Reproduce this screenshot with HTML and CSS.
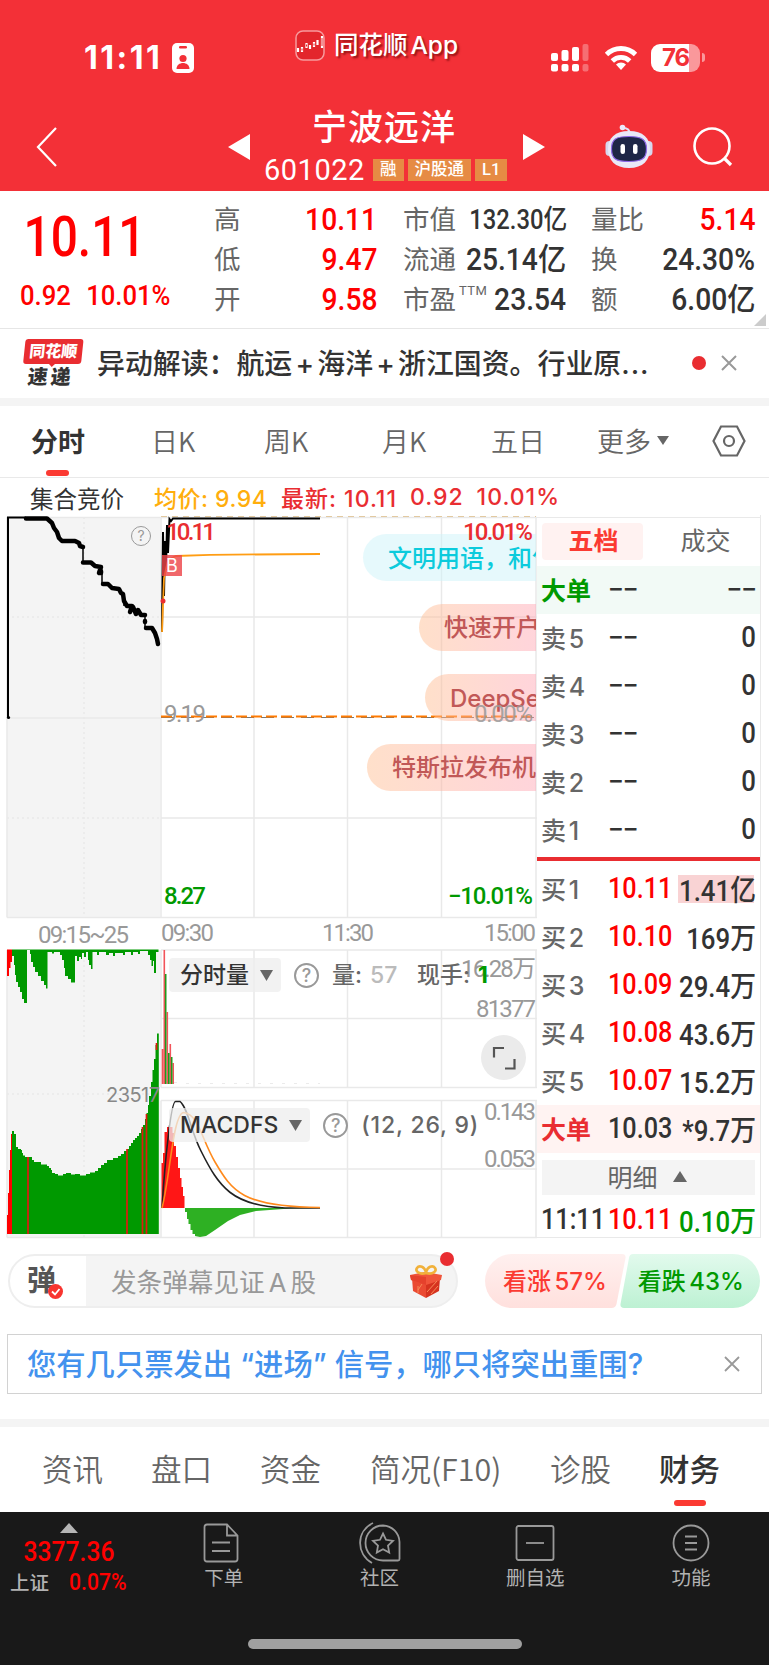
FILE: index.html
```html
<!DOCTYPE html>
<html lang="zh-CN">
<head>
    <meta charset="UTF-8">
    <meta name="viewport" content="width=device-width, initial-scale=1.0">
    <title>宁波远洋 601022</title>
    <link rel="stylesheet" href="styles.css">
</head>
<body>

    <header class="header">
        <div class="status-bar">
            <div class="status-time">11:11</div>
            <svg class="id-badge" width="22" height="30" viewBox="0 0 22 30">
                <rect width="22" height="30" rx="5" fill="#fff"/>
                <rect x="7" y="3" width="8" height="2.4" rx="1.2" fill="#f33037"/>
                <circle cx="11" cy="15.500" r="3.600" fill="#f33037"/>
                <path d="M4.500 26c0-8 13-8 13 0z" fill="#f33037"/>
            </svg>
            <div class="app-name">
                <svg width="30" height="31" viewBox="0 0 30 31">
                    <rect x="1" y="1" width="28" height="29" rx="7" fill="#e3262c" stroke="#f79a9d" stroke-width="1.500"/>
                    <path d="M3 18v4M7 17v5M11.500 13v5M15 15v4M19 12v5M22.500 10v5M27 6v12" stroke="#fff" stroke-width="2.200"/>
                    <path d="M7 18.500v2M11.500 14.500v2M19 13.500v2M27 8v8" stroke="#e3262c"/>
                </svg>
                <span>同花顺<b>App</b></span>
            </div>
            <svg class="signal" width="38" height="28" viewBox="0 0 38 28" fill="#fff">
                <rect y="9" width="7" height="8" rx="2"/>
                <rect x="10.500" y="6" width="7" height="11" rx="2"/>
                <rect x="21" y="3" width="7" height="14" rx="2"/>
                <rect x="31.500" width="6" height="17" rx="2" opacity=".3"/>
                <rect y="20" width="7" height="7.500" rx="2"/>
                <rect x="10.500" y="20" width="7" height="7.500" rx="2"/>
                <rect x="21" y="20" width="7" height="7.500" rx="2"/>
                <rect x="31.500" y="20" width="6" height="7.500" rx="2" opacity=".3"/>
            </svg>
            <svg class="wifi" width="34" height="26" viewBox="0 0 34 26" fill="none" stroke="#fff" stroke-width="4.800">
                <path d="M2.500 9.500a20.500 20.500 0 0 1 29 0"/>
                <path d="M8.300 16a12.300 12.300 0 0 1 17.400 0"/>
                <path d="M17 25l-5-5.500a7 7 0 0 1 10 0z" fill="#fff" stroke="none"/>
            </svg>
            <div class="battery"><span>76</span></div>
        </div>

        <div class="nav">
            <svg class="back" width="22" height="40" viewBox="0 0 22 40" fill="none" stroke="#fff" stroke-width="2.200">
                <path d="M20 1L2 20l18 19"/>
            </svg>
            <svg class="prev" width="22" height="26" viewBox="0 0 22 26"><path d="M22 0v26L0 13z" fill="#fff"/></svg>
            <div class="stock">
                <h1>宁波远洋</h1>
                <div class="stock-code">
                    <span class="code">601022</span>
                    <span class="tag">融</span>
                    <span class="tag">沪股通</span>
                    <span class="tag">L1</span>
                </div>
            </div>
            <svg class="next" width="22" height="26" viewBox="0 0 22 26"><path d="M0 0v26l22-13z" fill="#fff"/></svg>
            <svg class="robot" width="48" height="50" viewBox="0 0 48 50">
                <path d="M18 4q7 0 6.500 6" fill="none" stroke="#e3e2f6" stroke-width="2.200"/>
                <circle cx="17.500" cy="3.500" r="2.800" fill="#ece9fa"/>
                <rect x=".5" y="17" width="8" height="15" rx="4" fill="#d7d7ee"/>
                <rect x="39.500" y="17" width="8" height="15" rx="4" fill="#d7d7ee"/>
                <path d="M24 7c14 0 21 7 21 18s-7 19-21 19S3 36 3 25 10 7 24 7z" fill="#e9e8f7"/>
                <path d="M24 12.500c13 0 17.500 3 17.500 12.500S37 37.500 24 37.500 6.500 35 6.500 25 11 12.500 24 12.500z" fill="#1e2646" stroke="#8d68e6" stroke-width="1.200"/>
                <rect x="15.500" y="20" width="4.500" height="10" rx="2.200" fill="#fff"/>
                <rect x="28" y="20" width="4.500" height="10" rx="2.200" fill="#fff"/>
            </svg>
            <svg class="search" width="40" height="40" viewBox="0 0 40 40" fill="none" stroke="#fff" stroke-width="2.600">
                <circle cx="19" cy="19" r="17.500"/>
                <path d="M31 31l7 7" stroke-width="3.200"/>
            </svg>
        </div>
    </header>

    <section class="quote">
        <div class="quote-main">
            <div class="price">10.11</div>
            <div class="change"><span>0.92</span><span>10.01%</span></div>
        </div>
        <dl class="quote-col col-1">
            <div><dt>高</dt><dd class="up">10.11</dd></div>
            <div><dt>低</dt><dd class="up">9.47</dd></div>
            <div><dt>开</dt><dd class="up">9.58</dd></div>
        </dl>
        <dl class="quote-col col-2">
            <div><dt>市值</dt><dd class="small">132.30亿</dd></div>
            <div><dt>流通</dt><dd>25.14亿</dd></div>
            <div><dt>市盈<sup>TTM</sup></dt><dd>23.54</dd></div>
        </dl>
        <dl class="quote-col col-3">
            <div><dt>量比</dt><dd class="up">5.14</dd></div>
            <div><dt>换</dt><dd>24.30%</dd></div>
            <div><dt>额</dt><dd>6.00亿</dd></div>
        </dl>
        <svg class="corner" width="12" height="12" viewBox="0 0 12 12"><path d="M12 0v12H0z" fill="#ccc"/></svg>
    </section>

    <section class="news">
        <div class="news-logo">
            <div class="logo-top">同花顺</div>
            <div class="logo-bottom">速递</div>
        </div>
        <p>异动解读：航运<i>+</i>海洋<i>+</i>浙江国资。行业原<span class="dots">...</span></p>
        <span class="news-dot"></span>
        <svg width="16" height="16" viewBox="0 0 16 16" stroke="#999" stroke-width="2"><path d="M1 1l14 14M15 1L1 15"/></svg>
    </section>

    <nav class="period-tabs">
        <span class="active">分时</span>
        <span>日K</span>
        <span>周K</span>
        <span>月K</span>
        <span>五日</span>
        <span>更多<svg width="12" height="9" viewBox="0 0 12 9"><path d="M0 0h12L6 9z" fill="#666"/></svg></span>
        <svg class="gear" width="34" height="32" viewBox="0 0 34 32" fill="none" stroke="#666" stroke-width="2.200">
            <path d="M9 1.500h16L32.500 16 25 30.500H9L1.500 16z"/>
            <circle cx="17" cy="16" r="5"/>
        </svg>
    </nav>

    <div class="price-info">
        <span class="auction">集合竞价</span>
        <span class="avg">均价: 9.94</span>
        <span class="latest">最新: 10.11</span>
        <span class="latest diff">0.92</span>
        <span class="latest">10.01%</span>
    </div>

    <main class="trade">
        <div class="chart">
            <svg width="537" height="724" viewBox="0 515 537 724">
                <!-- call auction background -->
                <rect x="7" y="517" width="153" height="400" fill="#f4f4f4"/>
                <rect x="7" y="950" width="153" height="287" fill="#f4f4f4"/>

                <!-- grid -->
                <g stroke="#e9e9e9" stroke-width="1.500" fill="none">
                    <path d="M7 517.500H537M161 617H537M7 718H161M161 818H537M7 917.500H537"/>
                    <path d="M161 517V917.500M254 517V917.500M347.500 517V917.500M441.500 517V917.500M536 517V917.500"/>
                    <path d="M161 950H537M161 1018.500H537M161 1087.500H537M161 950V1087.500M254 950V1087.500M347.500 950V1087.500M441.500 950V1087.500M536 950V1087.500"/>
                    <path d="M161 1100.500H537M161 1169H537M7 1237.500H537M161 1100.500V1237.500M254 1100.500V1237.500M347.500 1100.500V1237.500M441.500 1100.500V1237.500M536 1100.500V1237.500"/>
                    <path d="M7 517V917.500M7 950V1237.500"/>
                    <path d="M84 517V917M84 950V1237M7 617H161M7 818H161M7 1094H161" stroke-dasharray="2 3"/>
                </g>

                <!-- auction price -->
                <path d="M8 717.500V517.500H26" fill="none" stroke="#000" stroke-width="2"/>
                <circle cx="8.500" cy="717.500" r="1.600"/>
                <path d="M83 545V562M102 573V584M124 594V606M145 615V628" fill="none" stroke="#000" stroke-width="1.500"/>
                <path d="M26 518.500H47L52 523 54 528 57 532 59 538 62 541H75L79 543 80 546 83 547M83 562.500H91L95 566 101 567 99 573M101 571V573M103 584H108L112 588 119 589 121 593 123 594 124 601 127 606 132 606 130 612M133 607L136 614 138 610 141 615 145 615M145 621V622M146 628H152L155 633 157 639 158 644" fill="none" stroke="#000" stroke-width="4.500" stroke-linejoin="round" stroke-linecap="round"/>

                <!-- previous close and limit lines -->
                <path d="M161 516.500H536" stroke="#e2c9a0" stroke-width="1.200" stroke-dasharray="6 5"/>
                <path d="M161 717.500H536" stroke="#777" stroke-width="1.200" stroke-dasharray="13 7"/>
                <path d="M161 716.500H536" stroke="#ff7a00" stroke-width="1.800" stroke-dasharray="11 4"/>

                <!-- intraday price and average -->
                <path d="M162 632L163 532 164 596 165 541 166 570 167 525 168 553 169.500 519 171 521 173 518.500H320" fill="none" stroke="#000" stroke-width="2"/>
                <path d="M162 632L164 578 168 560 176 556 210 554.800 320 554" fill="none" stroke="#ff9d14" stroke-width="1.800"/>
                <circle cx="163" cy="601" r="2.500" fill="#e92d31"/>

                <g class="axis">
                    <text x="166" y="540" textLength="50" class="red">10.11</text>
                    <text x="164" y="722" textLength="42">9.19</text>
                    <text x="164" y="904" textLength="42" class="green">8.27</text>
                    <text x="38" y="943" textLength="91">09:15~25</text>
                    <text x="161" y="941" textLength="53">09:30</text>
                    <text x="322" y="941" textLength="52">11:30</text>
                    <text x="484" y="941" textLength="52">15:00</text>
                </g>

                <!-- auction volume -->
                <path d="M7 949.500H12V962H10.500V968H9V976H7z" fill="#f00"/>
                <path d="M12 949.500V956H14V965H15V975H16V982H18V987H20V992H22V999H24V1003H27V950H30V954H31V962H33V967H35V972H38V976H41V981H44V985H46V988.500H47.500V952H52V953.500H54V952H60V955H62V960H64V968H65V976H68V979H71V982.500H75V956H77V961H79V957H81V959H82V953H84V957H86V952H88V960H89V965H91V969H92.500V952H97V955H99V952H106V955H109V953H113V956H115V953H123V955H125V952H131V955H133V952H138V954H140V951H148V955H150V960H151.500V966H153V961H154V973H156V952H158.500V949.500z" fill="#090"/>
                <path d="M7 1234V1215H8V1193H9V1170H10V1150H11V1134H12V1234z" fill="#f00"/>
                <path d="M12 1234V1131H14V1134H16V1147H18V1149H21V1150H22V1153H23V1155.500H25V1157H32V1160H34V1162H41V1164.500H47V1166H49V1168H51V1170H52V1173H55V1174H58V1175.500H63V1174H66V1173H71V1174.500H75V1174H80V1175.500H86V1174H90V1172.500H95V1171H98V1168H101V1165H104V1163H107V1160H113V1158H118V1156H121V1154H124V1151H127V1149H129V1146H131V1143H133V1140H135V1138H137V1136H139V1133H141V1129H143V1125H145V1119H146.500V1113H148V1105H149V1096H151V1082H152.500V1070H154V1059H155.500V1045H157V1033.500H158.800V1234z" fill="#090"/>
                <path d="M28 1157V1234M127 1149V1234M142.500 1127V1234M146.500 1114V1234M156.500 1043V1050" stroke="#e01a10" stroke-width="1.700"/>
                <text x="106" y="1101.500" textLength="54" class="avol">23517</text>

                <!-- minute volume -->
                <path d="M162.500 1049V1084M164.300 950V1084M167.300 1012V1084M170.300 1044V1084M173.200 1063V1084" stroke="#f2545a" stroke-width="1.600"/>
                <path d="M165.700 974V1084M168.800 1053V1084M171.700 1057V1084" stroke="#1e9a1e" stroke-width="1.600"/>
                <path d="M174 1082.500H182M186 1083.500H320" stroke="#ddd" stroke-width=".6" stroke-dasharray="3 9"/>

                <!-- MACD -->
                <path d="M161.500 1208V1163H163V1153H164.500V1132H167V1127H172.500V1133H174V1146H176V1157H178V1168H180V1178H181.500V1187H183V1196H184.500V1208z" fill="#ff1616"/>
                <path d="M185 1208V1212H187V1219H188.500V1224H190.500V1230H192.500V1234H195V1236L200 1237 206 1236 215 1230 228 1221 240 1215 256 1211 290 1208.500 320 1208z" fill="#2eb023"/>
                <path d="M162 1208C165 1160 171 1101.500 175.500 1101.500H180C188 1108 191 1132 201 1151 219 1187 232 1206 285 1208H320" fill="none" stroke="#222" stroke-width="1.600"/>
                <path d="M162 1208C170 1178 173 1112 184 1112.500 199 1115 201 1138 215 1162 232 1191 242 1207 320 1207.500" fill="none" stroke="#ff8a1c" stroke-width="1.600"/>
            </svg>

            <div class="b-mark">B</div>
            <div class="help help-auction">?</div>

            <div class="danmaku dm-1">文明用语，和气</div>
            <div class="danmaku dm-2">快速开户</div>
            <div class="danmaku dm-3">DeepSeek</div>
            <div class="danmaku dm-4">特斯拉发布机器</div>

            <svg class="right-axis axis" width="537" height="724" viewBox="0 515 537 724">
                <text x="463" y="540" textLength="70" class="red">10.01%</text>
                <text x="474" y="722" textLength="59" opacity=".85">0.00%</text>
                <text x="448" y="904" textLength="85" class="green">−10.01%</text>
                <text x="461" y="977" textLength="75">16.28万</text>
                <text x="476" y="1017" textLength="60">81377</text>
                <text x="484" y="1120" textLength="52">0.143</text>
                <text x="484" y="1167" textLength="52">0.053</text>
            </svg>

            <div class="indicator ind-vol">
                <div class="ind-btn">分时量<svg width="13" height="11" viewBox="0 0 13 11"><path d="M0 0h13L6.500 11z" fill="#666"/></svg></div>
                <span class="help">?</span>
                <span class="ind-text vol-label">量: <em>57</em></span>
                <span class="ind-text hand-label">现手: <strong>1</strong></span>
            </div>
            <div class="indicator ind-macd">
                <div class="ind-btn">MACDFS<svg width="13" height="11" viewBox="0 0 13 11"><path d="M0 0h13L6.500 11z" fill="#666"/></svg></div>
                <span class="help">?</span>
                <span class="ind-text">(12, 26, 9)</span>
            </div>
            <div class="expand">
                <svg width="24" height="24" viewBox="0 0 24 24" fill="none" stroke="#555" stroke-width="2.200"><path d="M2 11.500V2h10M22.500 13v9.500H13"/></svg>
            </div>
        </div>

        <div class="book">
            <div class="book-tabs"><span class="active">五档</span><span>成交</span></div>
            <div class="row big-sell"><b>大单</b><span class="p dash">−−</span><span class="v dash">−−</span></div>
            <div class="row"><b>卖 5</b><span class="p dash">−−</span><span class="v">0</span></div>
            <div class="row"><b>卖 4</b><span class="p dash">−−</span><span class="v">0</span></div>
            <div class="row"><b>卖 3</b><span class="p dash">−−</span><span class="v">0</span></div>
            <div class="row"><b>卖 2</b><span class="p dash">−−</span><span class="v">0</span></div>
            <div class="row"><b>卖 1</b><span class="p dash">−−</span><span class="v">0</span></div>
            <div class="divider"></div>
            <div class="row hot"><b>买 1</b><span class="p up">10.11</span><span class="v">1.41亿</span></div>
            <div class="row"><b>买 2</b><span class="p up">10.10</span><span class="v">169万</span></div>
            <div class="row"><b>买 3</b><span class="p up">10.09</span><span class="v">29.4万</span></div>
            <div class="row"><b>买 4</b><span class="p up">10.08</span><span class="v">43.6万</span></div>
            <div class="row"><b>买 5</b><span class="p up">10.07</span><span class="v">15.2万</span></div>
            <div class="row big-buy"><b>大单</b><span class="p">10.03</span><span class="v">*9.7万</span></div>
            <div class="detail">明细<svg width="14" height="11" viewBox="0 0 14 11"><path d="M7 0l7 11H0z" fill="#666"/></svg></div>
            <div class="row tick"><span class="t">11:11</span><span class="p up">10.11</span><span class="v down">0.10万</span></div>
        </div>
    </main>

    <section class="comment">
        <div class="comment-box">
            <div class="comment-toggle">
                <span>弹</span>
                <svg width="15" height="15" viewBox="0 0 15 15"><circle cx="7.500" cy="7.500" r="7.500" fill="#f8342f"/><path d="M4 7.500l3 3L11.500 5" fill="none" stroke="#fff" stroke-width="1.800"/></svg>
            </div>
            <div class="comment-input">发条弹幕见证 A 股</div>
            <svg class="gift" width="32" height="34" viewBox="0 0 32 34">
                <path d="M2 14l14 5v15L3 27z" fill="#ea4a32"/>
                <path d="M30 14l-14 5v15l13-7z" fill="#d6331f"/>
                <path d="M0 11l15-3 17 3-1 5-15 5L1 16z" fill="#f0553b"/>
                <path d="M16 13L0 11l1 5 15 5z" fill="#e5412c"/>
                <path d="M8 22v7M12 20l-4 6M27 17l-10 11M28 22l-7 8" stroke="#f78a58" stroke-width="1"/>
                <path d="M16 9C9 11 5 7 7 4s8-2 9 5c1-7 7-8 9-5s-2 7-9 5z" fill="none" stroke="#f1b13a" stroke-width="2.600"/>
            </svg>
            <span class="gift-dot"></span>
        </div>
        <div class="vote">
            <svg width="276" height="54" viewBox="0 0 276 54">
                <defs>
                    <linearGradient id="rise" x1="0" y1="0" x2="0" y2="1"><stop offset="0" stop-color="#fff0ef"/><stop offset="1" stop-color="#ffe0dd"/></linearGradient>
                    <linearGradient id="fall" x1="0" y1="0" x2="0" y2="1"><stop offset="0" stop-color="#e2faed"/><stop offset="1" stop-color="#bdf1d3"/></linearGradient>
                </defs>
                <path d="M27 0h110q4 0 3.500 4l-9 46q-1 4-5 4H27a27 27 0 0 1 0-54z" fill="url(#rise)"/>
                <path d="M148 0h100a27 27 0 0 1 0 54H139q-4 0-3.500-4l8.500-46q.5-4 4-4z" fill="url(#fall)"/>
            </svg>
            <div class="vote-text"><span class="vote-up">看涨 57%</span><span class="vote-down">看跌 43%</span></div>
        </div>
    </section>

    <section class="promo">
        <p>您有几只票发出<i class="lq">“</i>进场<i class="rq">”</i>信号，哪只将突出重围?</p>
        <svg width="16" height="16" viewBox="0 0 16 16" stroke="#999" stroke-width="1.800"><path d="M1 1l14 14M15 1L1 15"/></svg>
    </section>

    <nav class="info-tabs">
        <span>资讯</span>
        <span>盘口</span>
        <span>资金</span>
        <span>简况(F10)</span>
        <span>诊股</span>
        <span class="active">财务</span>
    </nav>

    <footer class="footer">
        <div class="toolbar">
            <div class="index">
                <svg width="18" height="10" viewBox="0 0 18 10"><path d="M9 0l9 10H0z" fill="#b5b5b5"/></svg>
                <div class="index-value">3377.36</div>
                <div class="index-name"><span>上证</span><em>0.07%</em></div>
            </div>
            <div class="tool order">
                <svg width="36" height="40" viewBox="0 0 36 40"><path d="M24 1.500H4Q1.500 1.500 1.500 4v32q0 2.500 2.500 2.500h28q2.500 0 2.500-2.500V12.500zM24 1.500V12.500H34.500M9 19.500H27M9 28H27"/></svg>
                <span>下单</span>
            </div>
            <div class="tool">
                <svg width="42" height="42" viewBox="0 0 42 42"><path d="M24 3.500a17 17 0 0 0 0 35h15q1.500 0 1.500-1.500V20A17 17 0 0 0 24 3.500zM14 1C-3 9-3 32 13 41"/><path d="M24 11.500l3 6.300 7 1-5 4.800 1.200 7L24 27.200l-6.200 3.400 1.200-7-5-4.800 7-1z"/></svg>
                <span>社区</span>
            </div>
            <div class="tool">
                <svg width="40" height="38" viewBox="0 0 40 38"><rect x="1.500" y="2" width="37" height="34" rx="2"/><path d="M11 19h18"/></svg>
                <span>删自选</span>
            </div>
            <div class="tool">
                <svg width="38" height="38" viewBox="0 0 38 38"><circle cx="19" cy="19" r="17.500"/><path d="M13 12.500h12M13 19h12M13 25.500h12"/></svg>
                <span>功能</span>
            </div>
        </div>
        <div class="home-bar"></div>
    </footer>

</body>
</html>
```

FILE: styles.css
```css
* {
    box-sizing: border-box;
    margin: 0;
    padding: 0;
}

body {
    width: 769px;
    height: 1665px;
    overflow: hidden;
    background: #fff;
    color: #333;
    font-family: Inter, "Noto Sans CJK SC", sans-serif;
    white-space: nowrap;
}

svg {
    display: block;
    flex: none;
}

i, em {
    font-style: normal;
}

.up {
    color: #f00;
}

/* Header */
.header {
    height: 191px;
    background: #f33037;
    color: #fff;
}

.status-bar {
    display: flex;
    height: 104px;
    padding-top: 30px;
}

.status-time {
    width: 88px;
    margin-left: 84px;
    padding-top: 8px;
    font-size: 32px;
    font-weight: 700;
    line-height: 40px;
    letter-spacing: 2.5px;
}

.id-badge {
    margin-top: 13px;
}

.app-name {
    display: flex;
    gap: 9px;
    width: 257px;
    margin-left: 101px;
    font-size: 24.5px;
    font-weight: 500;
    line-height: 30px;
    text-shadow: 2px 2px 2px rgba(90, 0, 0, 0.6);
}

.app-name b {
    margin-left: 3px;
    font-size: 24.5px;
    font-weight: 500;
}

.signal {
    margin-top: 14px;
    margin-left: -1px;
}

.wifi {
    margin: 15px 13px 0 15px;
}

.battery {
    position: relative;
    width: 49px;
    height: 28px;
    margin-top: 14px;
    border-radius: 9px;
    background: linear-gradient(90deg, #fff 77%, #fa989b 77%);
    color: #f33037;
    font-size: 24px;
    font-weight: 700;
    line-height: 28px;
    text-align: center;
    letter-spacing: -1px;
}

.battery::after {
    content: "";
    position: absolute;
    top: 9px;
    right: -5px;
    width: 3px;
    height: 9px;
    border-radius: 0 4px 4px 0;
    background: #fa989b;
}

.nav {
    display: flex;
    height: 87px;
}

.back {
    margin: 23px 0 0 36px;
}

.prev {
    margin: 30px 0 0 170px;
}

.stock {
    width: 273px;
}

.stock h1 {
    padding-left: 62px;
    font-size: 35px;
    font-weight: 500;
    line-height: 46px;
    letter-spacing: 1px;
}

.stock-code {
    display: flex;
    align-items: center;
    height: 36px;
    margin-left: 14px;
    padding-top: 4px;
}

.code {
    width: 109px;
    font: 400 29px Roboto, sans-serif;
    letter-spacing: 0.5px;
}

.tag {
    height: 22px;
    margin-right: 4px;
    padding: 0 7px;
    background: #e68b44;
    font-family: Roboto, "Noto Sans CJK SC", sans-serif;
    font-size: 16.5px;
    font-weight: 500;
    line-height: 21px;
}

.next {
    margin-top: 30px;
}

.robot {
    margin: 20px 0 0 60px;
}

.search {
    margin: 23px 0 0 40px;
}

/* Quote */
.quote {
    position: relative;
    display: flex;
    height: 138px;
    border-bottom: 1px solid #e6e6e6;
    font-family: Roboto, "Noto Sans CJK SC", sans-serif;
}

.quote-main {
    width: 214px;
    padding-left: 20px;
    color: #f00;
    font-weight: 500;
}

.price {
    height: 86px;
    padding: 14px 0 0 4px;
    font-size: 55px;
    line-height: 64px;
    transform: scaleX(0.87);
    transform-origin: 0 0;
}

.change {
    display: flex;
    gap: 17px;
    margin-top: -1px;
    font-size: 28.5px;
    line-height: 40px;
    transform: scaleX(0.9);
    transform-origin: 0 0;
}

.quote-col {
    padding-top: 9px;
}

.quote-col div {
    display: flex;
    justify-content: space-between;
    height: 40px;
    line-height: 40px;
}

.quote-col dt {
    color: #666;
    font-size: 26.5px;
}

.quote-col dd {
    font-size: 31px;
    font-weight: 500;
    transform: scaleX(0.91);
    transform-origin: 100% 0;
}

.quote-col .small {
    font-size: 27px;
    transform: scaleX(0.88);
}

.quote-col sup {
    position: relative;
    top: -14px;
    margin-left: 3px;
    font-size: 13px;
    line-height: 0;
    vertical-align: baseline;
    letter-spacing: 0.5px;
}

.col-1 {
    width: 163px;
}

.col-2 {
    width: 163px;
    margin-left: 26px;
}

.col-3 {
    width: 164px;
    margin-left: 25px;
}

.corner {
    position: absolute;
    right: 3px;
    bottom: 2px;
}

/* News */
.news {
    display: flex;
    align-items: center;
    height: 77px;
    padding-left: 23px;
    border-bottom: 8px solid #f4f4f4;
}

.news-logo {
    width: 58px;
    margin-right: 16px;
    font-weight: 900;
    text-align: center;
    transform: skewX(-6deg);
}

.logo-top {
    position: relative;
    height: 25px;
    border-radius: 3px;
    background: #e92d31;
    color: #fff;
    font-size: 16px;
    line-height: 24px;
}

.logo-top::after {
    content: "";
    position: absolute;
    left: 25px;
    top: 24px;
    border: 4px solid transparent;
    border-top-color: #e92d31;
}

.logo-bottom {
    height: 25px;
    font-size: 20px;
    line-height: 27px;
    letter-spacing: 3px;
}

.news p {
    width: 595px;
    padding-bottom: 4px;
    font-size: 27.9px;
    font-weight: 500;
}

.news i {
    display: inline-block;
    width: 25px;
    text-align: center;
}

.dots {
    letter-spacing: 1px;
}

.news-dot {
    width: 14px;
    height: 14px;
    margin: 0 15px 2px 0;
    border-radius: 50%;
    background: #e92d31;
}

.news > svg {
    margin-bottom: 2px;
}

/* Period tabs */
.period-tabs {
    display: grid;
    grid-template-columns: 120px 113px 118px 109px 106px 115px 34px;
    align-items: center;
    height: 72px;
    padding: 0 0 2px 31px;
    border-bottom: 1px solid #e9e9e9;
    color: #666;
    font-family: "Noto Sans CJK SC", sans-serif;
    font-size: 27px;
    font-weight: 350;
}

.period-tabs span {
    display: flex;
    align-items: center;
    gap: 6px;
}

.period-tabs .active {
    position: relative;
    color: #333;
    font-weight: 700;
}

.period-tabs .active::after {
    content: "";
    position: absolute;
    left: 15px;
    bottom: -16px;
    width: 23px;
    height: 6px;
    border-radius: 3px;
    background: #fb3a32;
}

.price-info {
    display: flex;
    align-items: center;
    height: 37px;
    padding: 0 0 0 30px;
    font-size: 23px;
    font-weight: 500;
}

.auction {
    width: 124px;
    padding-top: 2px;
    font-size: 23.5px;
    font-weight: 400;
}

.avg {
    width: 127px;
    color: #ffae0d;
    letter-spacing: 0.5px;
}

.latest {
    margin-right: 13px;
    color: #e92d31;
    letter-spacing: 1px;
}

/* Chart */
.trade {
    display: flex;
    height: 724px;
}

.chart {
    position: relative;
    width: 537px;
    overflow: hidden;
}

.axis {
    fill: #999;
    font-family: Roboto, "Noto Sans CJK SC", sans-serif;
    font-size: 24px;
}

.axis .red {
    fill: #e92d31;
    font-weight: 500;
}

.axis .green {
    fill: #090;
    font-weight: 500;
}

.avol {
    fill: #888;
    font-size: 20px;
}

.right-axis {
    position: absolute;
    left: 0;
    top: 0;
}

.b-mark {
    position: absolute;
    left: 162px;
    top: 40px;
    width: 20px;
    height: 21px;
    background: rgba(237, 70, 75, 0.82);
    color: #fff;
    font-size: 18px;
    line-height: 21px;
    text-align: center;
}

.help {
    width: 25px;
    height: 25px;
    border: 2px solid #999;
    border-radius: 50%;
    color: #999;
    font-size: 18px;
    line-height: 21px;
    text-align: center;
}

.help-auction {
    position: absolute;
    left: 131px;
    top: 11px;
    width: 20px;
    height: 20px;
    border-width: 1.5px;
    font-size: 14px;
    line-height: 17px;
}

.danmaku {
    position: absolute;
    height: 47px;
    padding-left: 25px;
    border-radius: 24px 0 0 24px;
    background: linear-gradient(90deg, rgba(255, 190, 145, 0.48), rgba(255, 160, 175, 0.45));
    color: #c15857;
    font-size: 24px;
    font-weight: 500;
    line-height: 47px;
    overflow: hidden;
}

.dm-1 {
    left: 363px;
    top: 19px;
    width: 173px;
    background: rgba(205, 243, 250, 0.5);
    color: #0ccbdc;
    line-height: 49px;
}

.dm-2 {
    left: 419px;
    top: 89px;
    width: 117px;
}

.dm-3 {
    left: 425px;
    top: 159px;
    width: 111px;
    line-height: 49px;
}

.dm-4 {
    left: 367px;
    top: 229px;
    width: 169px;
}

.indicator {
    position: absolute;
    left: 169px;
    display: flex;
    align-items: center;
    height: 34px;
    font-size: 23px;
    font-weight: 500;
}

.ind-vol {
    top: 443px;
    line-height: 32px;
}

.ind-macd {
    top: 593px;
}

.ind-btn {
    display: flex;
    align-items: center;
    gap: 11px;
    height: 34px;
    margin-right: 13px;
    padding: 0 8px 0 11px;
    border-radius: 4px;
    background: rgba(238, 238, 238, 0.75);
}

.indicator .help {
    line-height: 21px;
}

.ind-text {
    margin-left: 13px;
    color: #666;
}

.ind-macd .ind-text {
    letter-spacing: 0.8px;
}

.ind-text em {
    margin-left: 2px;
    color: #bbb;
}

.vol-label {
    width: 72px;
}

.ind-text strong {
    margin-left: 2px;
    color: #090;
    font-weight: 700;
}

.expand {
    position: absolute;
    left: 481px;
    top: 520px;
    display: flex;
    align-items: center;
    justify-content: center;
    width: 45px;
    height: 45px;
    border-radius: 50%;
    background: #ebebeb;
}

/* Order book */
.book {
    width: 224px;
    height: 723px;
    padding-top: 2px;
    border-right: 1px solid #e9e9e9;
    border-bottom: 1px solid #e9e9e9;
    font-family: Roboto, "Noto Sans CJK SC", sans-serif;
    background: linear-gradient(#e9e9e9, #e9e9e9) 0 2px / 100% 1px no-repeat;
}

.book-tabs {
    display: flex;
    height: 49px;
    padding: 6px 0 0 5px;
    font-size: 25px;
    line-height: 37px;
    color: #666;
}

.book-tabs span {
    flex: none;
    width: 125px;
    text-align: center;
}

.book-tabs .active {
    width: 101px;
    height: 37px;
    padding-left: 2px;
    border-radius: 4px;
    background: #fff2f1;
    color: #fb3a32;
    font-weight: 700;
}

.row {
    display: flex;
    align-items: center;
    height: 48px;
    padding: 0 4px 2px 4px;
    font-size: 29px;
    font-weight: 500;
}

.row b {
    flex: none;
    width: 67px;
    color: #666;
    font-family: Inter, "Noto Sans CJK SC", sans-serif;
    font-size: 25px;
    font-weight: 500;
    word-spacing: -4px;
}

.row .p {
    flex: none;
    width: 66px;
    transform: scaleX(0.87);
    transform-origin: 0 0;
}

.row .v {
    flex: 1;
    margin-left: -20px;
    text-align: right;
    transform: scaleX(0.89);
    transform-origin: 100% 0;
}

.row .dash {
    font-size: 28px;
    transform: none;
    letter-spacing: -1px;
}

.hot {
    background: linear-gradient(#f9d3d4, #f9d3d4) 141px 10px / 76px 28px no-repeat;
}

.big-sell {
    background: #f2faf6;
}

.big-sell b {
    color: #090;
    font-weight: 700;
}

.big-buy {
    background: #fff3f2;
}

.big-buy b {
    color: #e92d31;
    font-weight: 700;
}

.divider {
    height: 4px;
    margin: 3px 0 4px;
    background: #e92d31;
}

.detail {
    display: flex;
    align-items: center;
    justify-content: center;
    gap: 15px;
    width: 213px;
    height: 35px;
    margin: 7px 0 1px 5px;
    padding: 0 3px 3px 0;
    background: #f4f4f4;
    color: #666;
    font-size: 25px;
}

.row .t {
    flex: none;
    width: 67px;
    transform: scaleX(0.87);
    transform-origin: 0 0;
}

.row .down {
    color: #090;
}

/* Comment bar */
.comment {
    display: flex;
    height: 80px;
    padding: 15px 0 0 8px;
}

.comment-box {
    position: relative;
    display: flex;
    align-items: center;
    width: 450px;
    height: 54px;
    border: 2px solid #eee;
    border-radius: 27px;
    background: linear-gradient(90deg, #fff 76px, #f4f4f4 76px);
}

.comment-toggle {
    position: relative;
    width: 76px;
    padding: 0 0 7px 17px;
    color: #555;
    font-size: 29px;
    font-weight: 700;
}

.comment-toggle svg {
    position: absolute;
    left: 38px;
    bottom: 7px;
}

.comment-input {
    width: 298px;
    padding: 0 0 2px 25px;
    color: #999;
    font-size: 25.6px;
    word-spacing: -3px;
}

.gift {
    margin-left: 26px;
}

.gift-dot {
    position: absolute;
    right: 2px;
    top: -4px;
    width: 14px;
    height: 14px;
    border-radius: 50%;
    background: #e92d31;
}

.vote {
    position: relative;
    width: 276px;
    margin-left: 27px;
}

.vote-text {
    position: absolute;
    left: 18px;
    top: 0;
    display: flex;
    gap: 31px;
    font-size: 24px;
    font-weight: 500;
    line-height: 55px;
    word-spacing: -3px;
}

.vote-up {
    color: #fb3a32;
}

.vote-down {
    color: #090;
}

/* Promo */
.promo {
    display: flex;
    align-items: center;
    justify-content: space-between;
    width: 755px;
    height: 60px;
    margin: 15px 0 25px 7px;
    padding: 0 21px 0 19px;
    border: 1px solid #d2d2d2;
    color: #4392ee;
    font-size: 29.3px;
    font-weight: 500;
}

.promo p {
    padding-bottom: 4px;
}

.promo i {
    display: inline-block;
    width: 22px;
}

.promo .lq {
    text-align: right;
}

/* Info tabs */
.info-tabs {
    display: grid;
    grid-template-columns: 109px 109px 110px 180px 109px 62px;
    align-items: center;
    height: 93px;
    padding: 0 0 3px 42px;
    border-top: 8px solid #f4f4f4;
    color: #666;
    font-family: "Noto Sans CJK SC", sans-serif;
    font-size: 30.5px;
    font-weight: 350;
}

.info-tabs .active {
    position: relative;
    color: #333;
    font-weight: 500;
}

.info-tabs .active::after {
    content: "";
    position: absolute;
    left: 15px;
    bottom: -16px;
    width: 32px;
    height: 6px;
    border-radius: 3px;
    background: #fb3a32;
}

/* Footer */
.footer {
    height: 153px;
    background: #191919;
    color: #b2b2b2;
}

.toolbar {
    display: flex;
    height: 127px;
}

.index {
    width: 146px;
    padding-top: 11px;
}

.index svg {
    margin-left: 60px;
}

.index-value {
    width: 138px;
    padding-top: 2px;
    color: #f00;
    font: 500 28px/34px Roboto, sans-serif;
    text-align: center;
    transform: scaleX(0.88);
}

.index-name {
    display: flex;
    gap: 20px;
    padding-left: 10px;
    font-size: 19.5px;
    font-weight: 500;
    line-height: 28px;
}

.index-name em {
    color: #f00;
    font: 500 23px/28px Roboto, sans-serif;
    transform: scaleX(0.92);
    transform-origin: 0 0;
}

.tool {
    display: flex;
    flex-direction: column;
    align-items: center;
    width: 155.7px;
    padding-top: 9px;
    font-size: 19.5px;
}

.tool svg {
    height: 44px;
    fill: none;
    stroke: #999;
    stroke-width: 1.8;
}

.order svg {
    margin-right: 6px;
}

.tool span {
    line-height: 27px;
}

.home-bar {
    width: 274px;
    height: 10px;
    margin-left: 248px;
    border-radius: 5px;
    background: #a0a0a0;
}
```
